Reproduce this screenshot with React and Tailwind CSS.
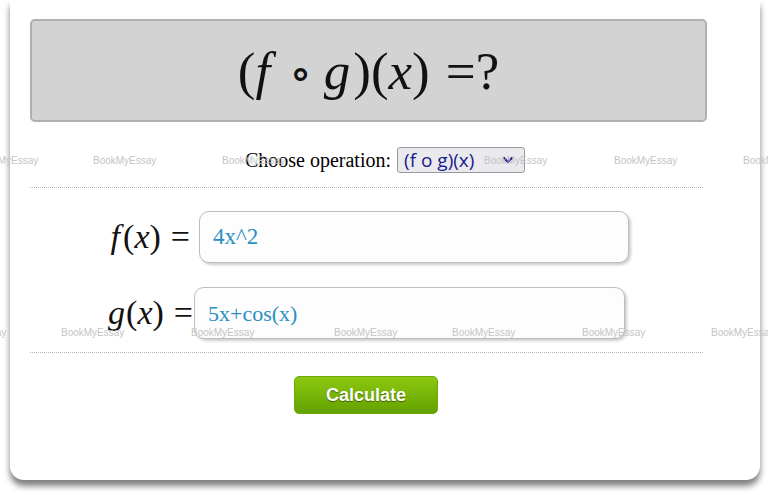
import React from "react";

const serif = { fontFamily: '"Liberation Serif", "DejaVu Serif", serif' };

function Watermark({ x, y }) {
  return (
    <span
      className="absolute text-[10px] leading-none text-[#c4c4c4] whitespace-nowrap pointer-events-none"
      style={{ left: x, top: y, fontFamily: '"Liberation Sans", Arial, sans-serif' }}
    >
      BookMyEssay
    </span>
  );
}

export default function App() {
  const row1 = [-25, 93, 222, 484, 614, 743];
  const row2 = [-57, 61, 191, 334, 452, 582, 711];
  return (
    <div className="relative w-[768px] h-[495px] bg-white overflow-hidden">
      <div className="ml-[10px] w-[750px] h-[480px] bg-white rounded-b-[14px] shadow-[0_6px_6px_rgba(0,0,0,0.5)] pt-[19px]">
        <div className="ml-[20px] w-[677px] h-[103px] bg-[#d3d3d3] border-2 border-[#b0b0b0] rounded-[5px] flex items-center justify-center">
          <div className="text-[53px] leading-none text-[#111] mt-[2px] flex items-baseline" style={serif}>
            <span>(</span>
            <i className="pr-[7px]">f</i>
            <span className="px-[12px] text-[46px]">∘</span>
            <i>g</i>
            <span className="pl-[3px]">)(</span>
            <i>x</i>
            <span>)</span>
            <span className="pl-[16px]">=?</span>
          </div>
        </div>

        <div className="mt-[25px] h-[26px] flex justify-center items-center">
          <span className="text-[20px] text-black mr-[6px]" style={serif}>
            Choose operation:
          </span>
          <div
            className="w-[128px] h-[26px] bg-[#e9e9ee] border border-[#9a9a9a] rounded-[3px] flex items-center justify-between pl-[6px] pr-[10px] text-[19px] text-[#1b1b8a]"
            style={{ fontFamily: '"Open Sans", "Noto Sans", sans-serif' }}
          >
            <span className="leading-none">(f o g)(x)</span>
            <svg width="12" height="8" viewBox="0 0 12 8">
              <path d="M1.5 1.5 L6 6 L10.5 1.5" fill="none" stroke="#1b1b8a" strokeWidth="2.2" />
            </svg>
          </div>
        </div>

        <div className="mt-[14px] ml-[20px] w-[673px] border-t border-dotted border-[#b5b5b5]" />

        <div className="mt-[23px] flex items-center">
          <div className="w-[181px] text-right text-[34px] leading-none text-[#111] pr-[1px]" style={serif}>
            <i className="pr-[3px]">f</i>(<i>x</i>)<span className="ml-[10px]">=</span>
          </div>
          <div className="ml-[8px] w-[430px] h-[52px] bg-[#fdfdfd] border border-[#bdbdbd] rounded-[10px] shadow-[2px_2px_3px_rgba(0,0,0,0.2)] flex items-center pl-[13px] text-[23px] text-[#2a8fc4]" style={serif}>
            4x^2
          </div>
        </div>

        <div className="mt-[24px] flex items-center">
          <div className="w-[183px] text-right text-[34px] leading-none text-[#111]" style={serif}>
            <i className="pr-[1px]">g</i>(<i>x</i>)<span className="ml-[10px]">=</span>
          </div>
          <div className="ml-[1px] w-[431px] h-[52px] bg-[#fdfdfd] border border-[#bdbdbd] rounded-[10px] shadow-[2px_2px_3px_rgba(0,0,0,0.2)] flex items-center pl-[13px] text-[22px] text-[#2a8fc4]" style={serif}>
            5x+cos(x)
          </div>
        </div>

        <div className="mt-[13px] ml-[20px] w-[673px] border-t border-dotted border-[#b5b5b5]" />

        <div className="mt-[23px] ml-[284px] w-[144px] h-[38px] rounded-[5px] bg-gradient-to-b from-[#8cc811] to-[#63a200] border border-[#6fa80a] flex items-center justify-center">
          <span
            className="text-white font-bold text-[18px] [text-shadow:0_1px_1px_rgba(0,0,0,0.45)]"
            style={{ fontFamily: '"Liberation Sans", Arial, sans-serif' }}
          >
            Calculate
          </span>
        </div>
      </div>

      {row1.map((x) => (
        <Watermark key={"a" + x} x={x} y={156} />
      ))}
      {row2.map((x) => (
        <Watermark key={"b" + x} x={x} y={328} />
      ))}
    </div>
  );
}
